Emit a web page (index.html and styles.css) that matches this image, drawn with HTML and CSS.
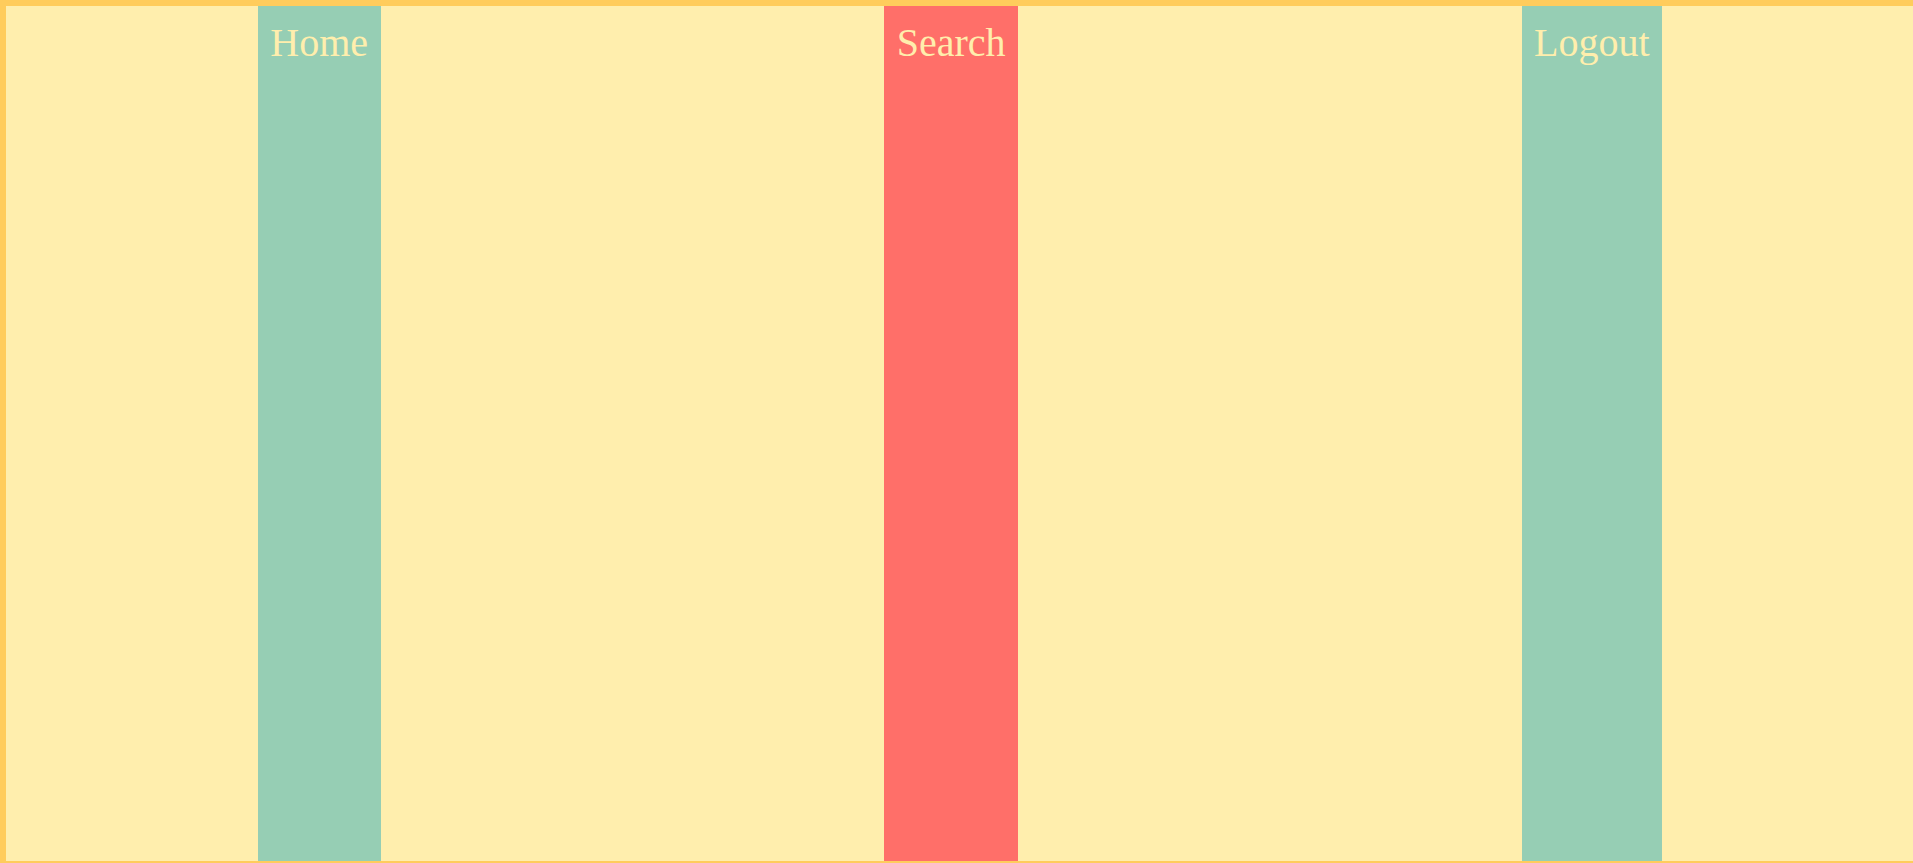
FILE: index.html
```html
<!DOCTYPE html>
<html>
<head>
<meta charset="utf-8">
<link rel="stylesheet" href="styles.css">
</head>
<body>
<nav class="nav">
  <a class="nav-item nav-item--teal">Home</a>
  <a class="nav-item nav-item--red">Search</a>
  <a class="nav-item nav-item--teal">Logout</a>
</nav>
</body>
</html>
```
FILE: styles.css
```css
html, body {
  margin: 0;
  padding: 0;
  overflow: hidden;
  background: #ffeead;
}
.nav {
  width: 1908px;
  height: 855px;
  border: 6px solid #ffcc5c;
  background: #ffeead;
  display: flex;
  justify-content: space-around;
  align-items: stretch;
}
.nav-item {
  font-family: "Liberation Serif", "Times New Roman", serif;
  font-size: 40px;
  color: #ffeead;
  padding: 13px 12.5px 0 12.5px;
}
.nav-item--teal {
  background: #96ceb4;
}
.nav-item--red {
  background: #ff6f69;
}
```
